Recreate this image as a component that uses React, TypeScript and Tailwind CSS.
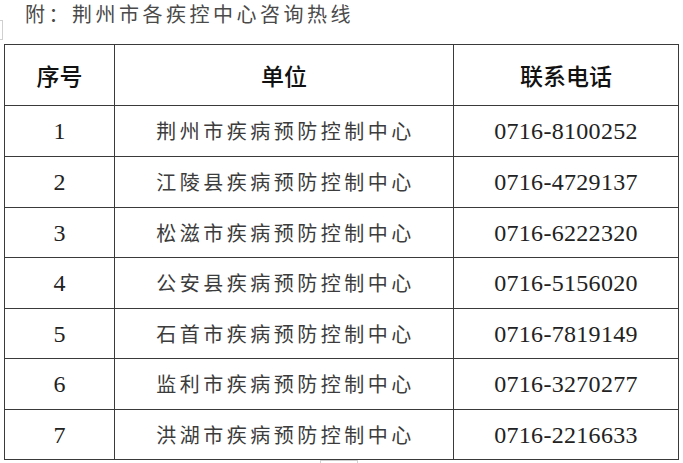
import React from "react";

const rows: [string, string, string][] = [
  ["1", "荆州市疾病预防控制中心", "0716-8100252"],
  ["2", "江陵县疾病预防控制中心", "0716-4729137"],
  ["3", "松滋市疾病预防控制中心", "0716-6222320"],
  ["4", "公安县疾病预防控制中心", "0716-5156020"],
  ["5", "石首市疾病预防控制中心", "0716-7819149"],
  ["6", "监利市疾病预防控制中心", "0716-3270277"],
  ["7", "洪湖市疾病预防控制中心", "0716-2216633"],
];

const heights = ["h-[51px]", "h-[51px]", "h-[50px]", "h-[51px]", "h-[50px]", "h-[51px]", "h-[50px]"];

const cjk = { fontFamily: '"Noto Sans CJK SC", "Noto Sans", sans-serif' };
const serif = { fontFamily: '"Liberation Serif", "Noto Sans CJK SC", serif' };

export default function App() {
  return (
    <div className="relative w-[683px] h-[463px] bg-white overflow-hidden">
      <div className="h-[44px] pl-[25px] pt-[1px]">
        <div
          className="text-[20px] leading-[26px] tracking-[3.5px] text-[#4a4a4a] whitespace-nowrap"
          style={cjk}
        >
          附：荆州市各疾控中心咨询热线
        </div>
      </div>
      <div className="pl-[4px]">
        <table className="border-collapse w-[674px] table-fixed">
          <colgroup>
            <col className="w-[110px]" />
            <col className="w-[339px]" />
            <col className="w-[225px]" />
          </colgroup>
          <thead>
            <tr className="h-[61px]">
              <th className="border border-[#3a3a3a] p-0 text-[23px] font-medium text-[#111]" style={cjk}>序号</th>
              <th className="border border-[#3a3a3a] p-0 text-[23px] font-medium text-[#111]" style={cjk}>单位</th>
              <th className="border border-[#3a3a3a] p-0 text-[23px] font-medium text-[#111]" style={cjk}>联系电话</th>
            </tr>
          </thead>
          <tbody>
            {rows.map((r, i) => (
              <tr key={r[0]} className={heights[i]}>
                <td className="border border-[#3a3a3a] p-0 text-center text-[24px] text-[#222]" style={serif}>{r[0]}</td>
                <td className="border border-[#3a3a3a] p-0 text-center" style={cjk}>
                  <span className="text-[20px] tracking-[3.5px] text-[#3c3c3c] pl-[3px]">{r[1]}</span>
                </td>
                <td className="border border-[#3a3a3a] p-0 text-center text-[24px] tracking-[0.3px] text-[#222]" style={serif}>
                  {r[2]}
                </td>
              </tr>
            ))}
          </tbody>
        </table>
      </div>
      <div className="absolute left-[320px] top-[460px] w-[38px] h-[10px] border border-[#cfcfcf]" />
      <div className="absolute left-0 top-[20px] w-[3px] h-[20px] border-r border-t border-b border-[#d0d0d0]" />
    </div>
  );
}
